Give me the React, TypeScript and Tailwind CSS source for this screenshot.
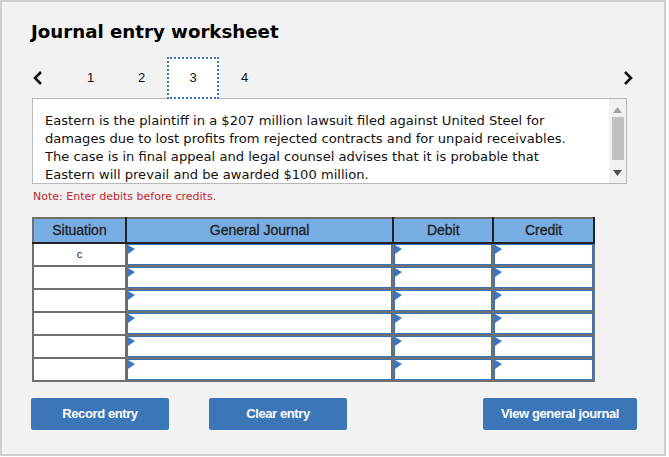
import React from "react";

const verdana = { fontFamily: '"DejaVu Sans", Verdana, sans-serif' };
const arial = { fontFamily: '"Liberation Sans", Arial, sans-serif' };

function Tri() {
  return (
    <svg className="absolute left-0 top-0" width="7" height="9" viewBox="0 0 7 9">
      <polygon points="0,0 7,4 0,9" fill="#3d77c1" />
    </svg>
  );
}

function InputCell() {
  return (
    <td className="border-2 border-[#707070] p-0 h-[23px]">
      <div className="relative h-full w-full border border-[#3a72b8] bg-white">
        <Tri />
      </div>
    </td>
  );
}

export default function App() {
  const rows = [0, 1, 2, 3, 4, 5];
  const th = "border-2 border-[#707070] border-r-[#222] border-b-[#222] text-[14px] font-normal text-[#222] [-webkit-text-stroke:0.3px_#222]";
  const btn = "h-[32px] bg-[#3a76b8] text-white text-[13px] font-bold rounded-[2px] tracking-[-0.4px]";
  return (
    <div className="w-[666px] h-[456px] border-2 border-[#cfcfcf] bg-[#f2f2f2] relative" style={verdana}>
      <div className="pl-[29px] pt-[18px]">
        <h1 className="text-[18.2px] font-bold text-black leading-[24px]">Journal entry worksheet</h1>
        <div className="flex items-center h-[42px] mt-[13px] relative z-10 w-[597px]" style={arial}>
          <svg width="12" height="16" viewBox="0 0 12 16" className="ml-[1px]">
            <polyline points="9,2 3,8 9,14" fill="none" stroke="#111" strokeWidth="2.6" />
          </svg>
          <div className="w-[51px] text-center text-[13px] ml-[21px] text-[#111]">1</div>
          <div className="w-[51px] text-center text-[13px] text-[#111]">2</div>
          <div className="w-[52px] h-[42px] bg-white border-2 border-dotted border-[#3b76bd] flex items-center justify-center text-[13px] text-[#111]">3</div>
          <div className="w-[51px] text-center text-[13px] text-[#111]">4</div>
          <div className="flex-1" />
          <svg width="12" height="16" viewBox="0 0 12 16" className="mr-[-6px]">
            <polyline points="3,2 9,8 3,14" fill="none" stroke="#111" strokeWidth="2.6" />
          </svg>
        </div>
        <div className="relative -mt-[1px] ml-[1px] w-[595px] h-[86px] bg-white border border-[#b8b8b8] flex">
          <div className="flex-1 pl-[12px] pt-[13px] text-[13.1px] leading-[18px] text-[#111] overflow-hidden whitespace-nowrap">
            Eastern is the plaintiff in a $207 million lawsuit filed against United Steel for
            <br />
            damages due to lost profits from rejected contracts and for unpaid receivables.
            <br />
            The case is in final appeal and legal counsel advises that it is probable that
            <br />
            Eastern will prevail and be awarded $100 million.
          </div>
          <div className="w-[17px] h-full bg-[#f1f1f1] flex flex-col items-center">
            <svg width="9" height="6" viewBox="0 0 9 6" className="mt-[8px]">
              <polygon points="0,6 4.5,0 9,6" fill="#a3a3a3" />
            </svg>
            <div className="w-[12px] h-[43px] bg-[#c1c1c1] mt-[4px]" />
            <div className="flex-1" />
            <svg width="9" height="6" viewBox="0 0 9 6" className="mb-[7px]">
              <polygon points="0,0 9,0 4.5,6" fill="#505050" />
            </svg>
          </div>
        </div>
        <p className="text-[11px] text-[#c1272d] mt-[6px] ml-[2px] leading-[14px]">Note: Enter debits before credits.</p>
        <table className="mt-[13px] border-collapse w-[563px] ml-[1px]" style={arial}>
          <thead>
            <tr className="bg-[#78ade3] h-[25px]">
              <th className={`${th} w-[93px]`}>Situation</th>
              <th className={`${th} w-[268px]`}>General Journal</th>
              <th className={`${th} w-[100px]`}>Debit</th>
              <th className={`${th} w-[101px]`}>Credit</th>
            </tr>
          </thead>
          <tbody>
            {rows.map((r) => (
              <tr key={r} className="h-[23px]">
                <td className="border-2 border-[#707070] bg-white text-center text-[11px] text-[#222] p-0">{r === 0 ? "c" : ""}</td>
                <InputCell />
                <InputCell />
                <InputCell />
              </tr>
            ))}
          </tbody>
        </table>
        <div className="flex mt-[16px] w-[606px]" style={arial}>
          <button className={`${btn} w-[138px]`}>Record entry</button>
          <button className={`${btn} w-[138px] ml-[40px]`}>Clear entry</button>
          <div className="flex-1" />
          <button className={`${btn} w-[154px]`}>View general journal</button>
        </div>
      </div>
    </div>
  );
}
